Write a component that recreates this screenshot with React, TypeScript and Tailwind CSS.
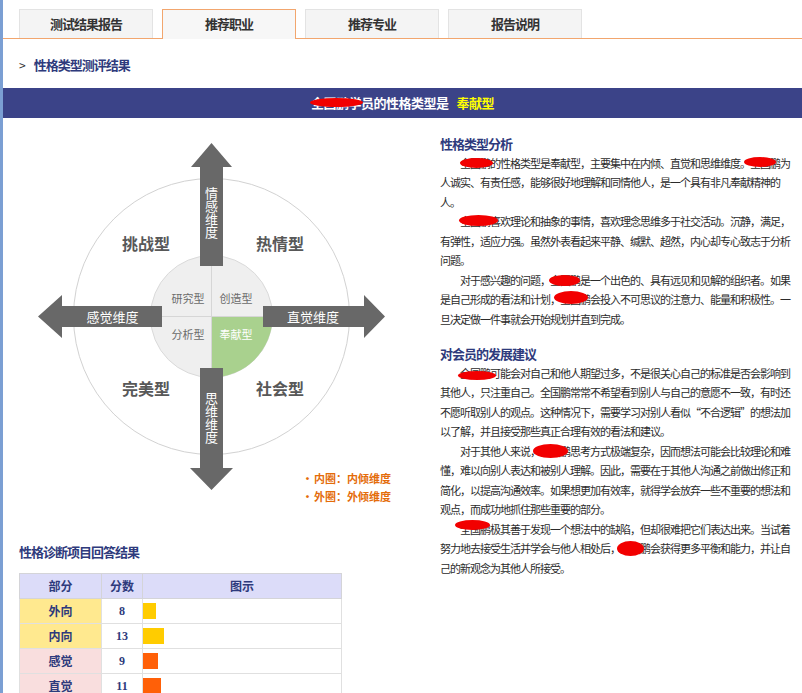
import React from "react";

function Blob({ c }: { c: string }) {
  return <span className={"absolute bg-[#f20000] rounded-[50%] " + c} />;
}

function L({
  children,
  indent,
  last,
}: {
  children: React.ReactNode;
  indent?: boolean;
  last?: boolean;
}) {
  return (
    <div
      className={
        "relative whitespace-nowrap " +
        (last ? "" : "text-justify [text-align-last:justify] ") +
        (indent ? "pl-[20px]" : "")
      }
    >
      {children}
    </div>
  );
}

const rows = [
  { name: "外向", score: 8, cell: "bg-[#ffe98f]", bar: "bg-[#ffcc00]" },
  { name: "内向", score: 13, cell: "bg-[#ffe98f]", bar: "bg-[#ffcc00]" },
  { name: "感觉", score: 9, cell: "bg-[#f9dede]", bar: "bg-[#ff6008]" },
  { name: "直觉", score: 11, cell: "bg-[#f9dede]", bar: "bg-[#ff6008]" },
];

function Tab({ label, active }: { label: string; active?: boolean }) {
  return (
    <div
      className={
        active
          ? "relative -mb-px flex h-[30px] w-[134px] shrink-0 items-center justify-center border border-b-0 border-[#f2a66e] bg-[#f7f7f7] pb-[1px] text-[13px] font-bold tracking-[-1px] text-[#333]"
          : "flex h-[29px] w-[134px] shrink-0 items-center justify-center border border-b-0 border-[#e3e3e3] bg-[#f4f4f4] text-[13px] font-bold tracking-[-1px] text-[#333]"
      }
    >
      {label}
    </div>
  );
}

function Diagram() {
  const cx = 211.5;
  const cy = 316.5;
  const r = 61;
  const font = "'Noto Sans CJK SC', 'Noto Sans', sans-serif";
  return (
    <svg
      width={417}
      height={402}
      viewBox="3 118 417 402"
      className="block"
      fontFamily={font}
    >
      <circle cx={cx} cy={cy} r={138} fill="#fff" stroke="#d2d2d2" strokeWidth={1} />
      <circle cx={cx} cy={cy} r={r} fill="#efefef" stroke="#dadada" strokeWidth={1} />
      <path
        d={`M ${cx} ${cy} L ${cx + r} ${cy} A ${r} ${r} 0 0 1 ${cx} ${cy + r} Z`}
        fill="#a9d18e"
      />
      <line x1={cx} y1={cy - r} x2={cx} y2={cy + r} stroke="#d6d6d6" strokeWidth={1} />
      <line x1={cx - r} y1={cy} x2={cx + r} y2={cy} stroke="#d6d6d6" strokeWidth={1} />

      <g fontSize={11} textAnchor="middle" dominantBaseline="central">
        <text x={188} y={298} fill="#6b6b6b">研究型</text>
        <text x={236} y={298} fill="#6b6b6b">创造型</text>
        <text x={188} y={334} fill="#6b6b6b">分析型</text>
        <text x={236} y={334} fill="#ffffff">奉献型</text>
      </g>

      <g fontSize={16} fontWeight={700} textAnchor="middle" dominantBaseline="central" fill="#585858">
        <text x={146} y={243}>挑战型</text>
        <text x={280} y={243}>热情型</text>
        <text x={146} y={388}>完美型</text>
        <text x={280} y={388}>社会型</text>
      </g>

      <g fill="#686868">
        <polygon points="211.5,143 232,167 223,167 223,266 200,266 200,167 191,167" />
        <polygon points="200,368 223,368 223,468 233,468 211.5,490 190,468 200,468" />
        <polygon points="38,316.5 62,295 62,306 162,306 162,327 62,327 62,338" />
        <polygon points="263,306 364,306 364,295 385,316.5 364,338 364,327 263,327" />
      </g>

      <g fontSize={13} fill="#ffffff" textAnchor="middle">
        <text x={211.5} y={213} writingMode="vertical-rl">情感维度</text>
        <text x={211.5} y={417.5} writingMode="vertical-rl">思维维度</text>
      </g>
      <g fontSize={13} fill="#ffffff" textAnchor="middle" dominantBaseline="central">
        <text x={112.5} y={316.5}>感觉维度</text>
        <text x={313} y={316.5}>直觉维度</text>
      </g>

      <g fontSize={11} fontWeight={600} fill="#e46c0a" dominantBaseline="central">
        <text x={302} y={478}>•</text>
        <text x={314} y={478}>内圈：内倾维度</text>
        <text x={302} y={496}>•</text>
        <text x={314} y={496}>外圈：外倾维度</text>
      </g>
    </svg>
  );
}

export default function App() {
  return (
    <div className="h-[693px] w-[802px] overflow-hidden bg-white font-['Noto_Sans_CJK_SC','Noto_Sans',sans-serif]">
      <div className="h-full border-l-[3px] border-[#7b9fd3]">
        {/* Tabs */}
        <div className="flex h-[39px] items-end gap-[9px] border-b border-[#f2a66e] pl-[16px]">
          <Tab label="测试结果报告" />
          <Tab label="推荐职业" active />
          <Tab label="推荐专业" />
          <Tab label="报告说明" />
        </div>

        {/* Breadcrumb */}
        <div className="mt-[17px] flex h-[18px] items-center pl-[16px] text-[13px] leading-[18px]">
          <span className="mr-[8px] text-[12px] text-[#333]">&gt;</span>
          <span className="font-bold tracking-[-1px] text-[#2e3a7c]">性格类型测评结果</span>
        </div>

        {/* Title bar */}
        <div className="mt-[14px] flex h-[30px] items-center justify-center bg-[#3b4388] text-[13px] font-bold tracking-[-0.5px] text-white">
          <span className="relative">
            全国鹏学
            <Blob c="left-[-1px] right-[-2px] top-[5px] h-[9px]" />
          </span>
          <span>员的性格类型是</span>
          <span className="ml-[8px] text-[#ffff00]">奉献型</span>
        </div>

        {/* Body */}
        <div className="flex">
          {/* Left column */}
          <div className="w-[417px] shrink-0">
            <Diagram />
            <div className="mt-[22px] pl-[16px] text-[13px] font-bold leading-[19px] tracking-[-1px] text-[#2e3a7c]">
              性格诊断项目回答结果
            </div>
            <div className="mt-[12px] pl-[16px]">
              <table className="w-[323px] table-fixed border-collapse text-[12px] font-bold text-[#2e3a7c]">
                <thead>
                  <tr className="h-[25px] bg-[#dcdcf9]">
                    <th className="w-[82px] border border-[#d4d4d8] font-bold">部分</th>
                    <th className="w-[41px] border border-[#d4d4d8] font-bold">分数</th>
                    <th className="border border-[#d4d4d8] font-bold">图示</th>
                  </tr>
                </thead>
                <tbody>
                  {rows.map((r) => (
                    <tr key={r.name} className="h-[25px]">
                      <td className={"border border-[#e0e0e0] text-center " + r.cell}>{r.name}</td>
                      <td className="border border-[#e0e0e0] text-center font-['Liberation_Serif',serif]">
                        {r.score}
                      </td>
                      <td className="border border-[#e0e0e0] px-0">
                        <div className={"h-[16px] " + r.bar} style={{ width: Math.round(r.score * 1.62) }} />
                      </td>
                    </tr>
                  ))}
                </tbody>
              </table>
            </div>
          </div>

          {/* Right column */}
          <div className="ml-[20px] w-[340px] shrink-0 pt-[16px] text-[11px] leading-[19.5px] tracking-[-1px] text-[#2b2b2b]">
            <div className="text-[13px] font-bold text-[#2e3a7c]">性格类型分析</div>
            <L indent>
              全国鹏的性格类型是奉献型，主要集中在内倾、直觉和思维维度。全国鹏为
              <Blob c="left-[20px] top-[4px] w-[33px] h-[10px]" />
              <Blob c="left-[304px] top-[3px] w-[32px] h-[10px]" />
            </L>
            <L>人诚实、有责任感，能够很好地理解和同情他人，是一个具有非凡奉献精神的</L>
            <L last>人。</L>
            <L indent>
              全国鹏喜欢理论和抽象的事情，喜欢理念思维多于社交活动。沉静，满足，
              <Blob c="left-[19px] top-[3px] w-[39px] h-[11px]" />
            </L>
            <L>有弹性，适应力强。虽然外表看起来平静、缄默、超然，内心却专心致志于分析</L>
            <L last>问题。</L>
            <L indent>
              对于感兴趣的问题，全国鹏是一个出色的、具有远见和见解的组织者。如果
              <Blob c="left-[109px] top-[4px] w-[31px] h-[11px]" />
            </L>
            <L>
              是自己形成的看法和计划，全国鹏会投入不可思议的注意力、能量和积极性。一
              <Blob c="left-[114px] top-[1px] w-[34px] h-[13px]" />
            </L>
            <L last>旦决定做一件事就会开始规划并直到完成。</L>

            <div className="mt-[15px] text-[13px] font-bold text-[#2e3a7c]">对会员的发展建议</div>
            <L indent>
              全国鹏可能会对自己和他人期望过多，不是很关心自己的标准是否会影响到
              <Blob c="left-[18px] top-[7px] w-[38px] h-[9px]" />
            </L>
            <L>其他人，只注重自己。全国鹏常常不希望看到别人与自己的意愿不一致，有时还</L>
            <L>不愿听取别人的观点。这种情况下，需要学习对别人看似“不合逻辑”的想法加</L>
            <L last>以了解，并且接受那些真正合理有效的看法和建议。</L>
            <L indent>
              对于其他人来说，全国鹏思考方式极端复杂，因而想法可能会比较理论和难
              <Blob c="left-[93px] top-[2px] w-[35px] h-[14px]" />
            </L>
            <L>懂，难以向别人表达和被别人理解。因此，需要在于其他人沟通之前做出修正和</L>
            <L>简化，以提高沟通效率。如果想更加有效率，就得学会放弃一些不重要的想法和</L>
            <L last>观点，而成功地抓住那些重要的部分。</L>
            <L indent>
              全国鹏极其善于发现一个想法中的缺陷，但却很难把它们表达出来。当试着
              <Blob c="left-[15px] top-[0px] w-[35px] h-[10px]" />
            </L>
            <L>
              努力地去接受生活并学会与他人相处后，全国鹏会获得更多平衡和能力，并让自
              <Blob c="left-[177px] top-[2px] w-[27px] h-[15px]" />
            </L>
            <L last>己的新观念为其他人所接受。</L>
          </div>
        </div>
      </div>
    </div>
  );
}
